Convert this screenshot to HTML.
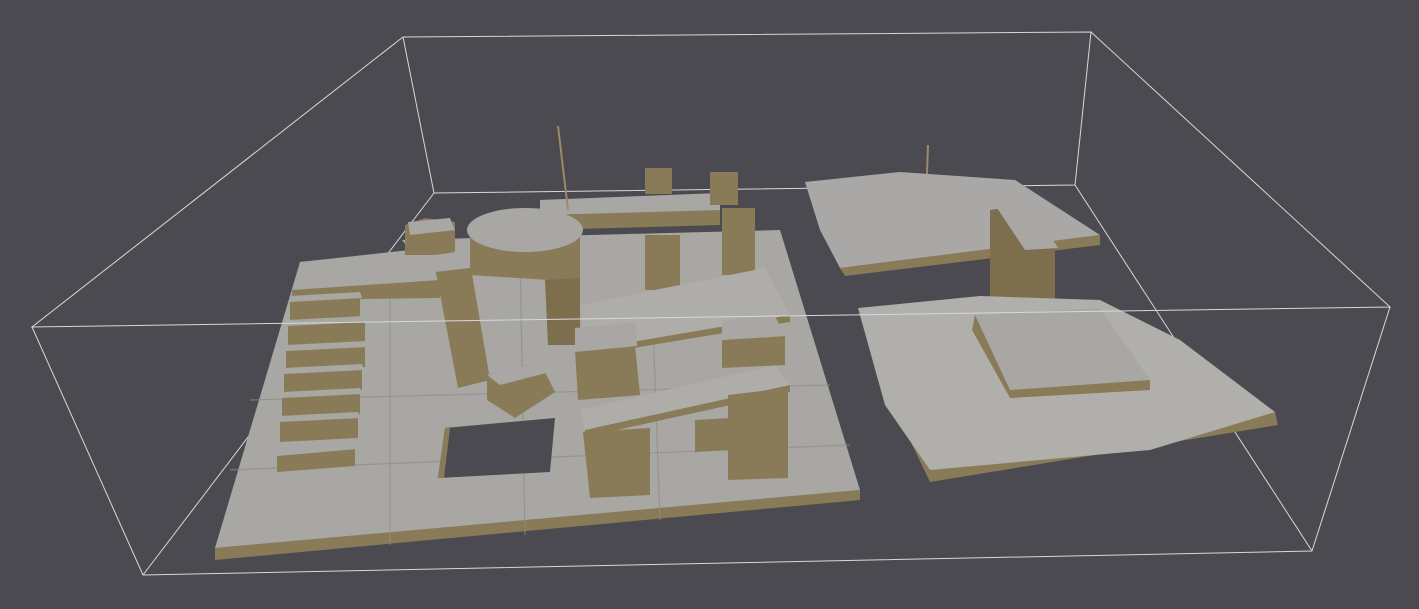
<!DOCTYPE html>
<html><head><style>html,body{margin:0;padding:0;background:#4b4a51;}svg{display:block}</style></head>
<body>
<svg width="1419" height="609" viewBox="0 0 1419 609" xmlns="http://www.w3.org/2000/svg">
<rect width="1419" height="609" fill="#4b4a51"/>
<g stroke="#d8d8dc" stroke-width="1" fill="none">
<polyline points="403,37 1091,32 1075,185 434,193 403,37"/>
<line x1="434" y1="193" x2="143" y2="575"/>
<line x1="1075" y1="185" x2="1312" y2="551"/>
</g>
<!-- left slab -->
<polygon points="215,548 860,490 860,500 215,560" fill="#8a7b58"/>
<polygon points="300,262 410,250 402,240 780,230 860,490 215,548" fill="#a8a7a4"/>
<g stroke="#8f8c86" stroke-width="1.2" fill="none" opacity="0.7">
<line x1="250" y1="400" x2="830" y2="385"/><line x1="230" y1="470" x2="850" y2="445"/>
<line x1="390" y1="260" x2="390" y2="545"/><line x1="520" y1="250" x2="525" y2="535"/><line x1="650" y1="240" x2="660" y2="520"/>
</g>
<polygon points="445,428 555,418 550,472 438,478" fill="#4b4a51"/>
<polygon points="445,428 450,428 444,478 438,478" fill="#8a7b58"/>
<!-- stairs -->
<polygon points="300,262 470,250 470,285 292,295" fill="#a8a7a4"/>
<polygon points="292,290 440,280 440,298 292,300" fill="#8a7b58"/>
<g fill="#8a7b58">
<polygon points="290,300 360,296 360,318 290,322"/>
<polygon points="288,325 365,320 365,342 288,346"/>
<polygon points="286,350 365,345 365,367 286,371"/>
<polygon points="284,372 362,368 362,390 284,394"/>
<polygon points="282,397 360,392 360,414 282,418"/>
<polygon points="280,421 358,416 358,438 280,442"/>
<polygon points="277,455 355,448 355,466 277,472"/>
</g>
<g fill="#a8a7a4">
<polygon points="290,296 360,292 362,298 290,302"/>
<polygon points="288,320 365,316 367,322 288,326"/>
<polygon points="286,345 365,341 367,347 286,351"/>
<polygon points="284,368 362,364 364,370 284,374"/>
<polygon points="282,392 360,388 362,394 282,398"/>
<polygon points="280,416 358,412 360,418 280,422"/>
<polygon points="277,450 355,443 357,449 277,456"/>
</g>
<!-- back structures -->
<polygon points="540,200 720,193 720,215 540,222" fill="#a8a7a4"/>
<polygon points="540,215 720,210 720,225 540,230" fill="#8a7b58"/>
<polygon points="405,225 425,218 455,222 455,255 405,255" fill="#8a7b58"/>
<polygon points="408,222 450,218 455,230 410,235" fill="#a8a7a4"/>
<polygon points="645,168 672,168 672,194 645,194" fill="#8a7b58"/>
<polygon points="710,172 738,172 738,205 710,205" fill="#8a7b58"/>
<polygon points="722,208 755,208 755,275 722,275" fill="#8a7b58"/>
<polygon points="645,235 680,235 680,290 645,290" fill="#8a7b58"/>
<line x1="558" y1="126" x2="568" y2="210" stroke="#9a8a68" stroke-width="2"/>
<line x1="928" y1="145" x2="926" y2="200" stroke="#9a8a68" stroke-width="2"/>
<!-- cylinder -->
<polygon points="470,232 580,236 580,282 470,275" fill="#8a7b58"/>
<polygon points="545,280 580,278 580,345 548,345" fill="#7d6e4e"/>
<ellipse cx="525" cy="230" rx="58" ry="22" fill="#a8a7a4"/>
<!-- pillar -->
<polygon points="435,268 470,262 490,380 458,388" fill="#8a7b58"/>
<polygon points="435,255 470,250 470,268 435,272" fill="#a8a7a4"/>
<polygon points="487,375 540,362 555,392 515,418 487,400" fill="#8a7b58"/>
<polygon points="487,375 540,362 550,372 500,385" fill="#a8a7a4"/>
<!-- ramp -->
<polygon points="580,305 765,268 790,315 585,350" fill="#aeada9"/>
<polygon points="580,410 775,365 790,385 585,430" fill="#aeada9"/>
<polygon points="585,350 790,315 790,322 585,356" fill="#8a7b58"/>
<polygon points="585,430 790,385 790,392 585,437" fill="#8a7b58"/>
<polygon points="575,350 635,345 640,395 578,400" fill="#8a7b58"/>
<polygon points="575,328 635,322 637,346 575,352" fill="#a8a7a4"/>
<polygon points="722,340 785,336 785,365 722,368" fill="#8a7b58"/>
<polygon points="722,320 775,316 785,336 722,340" fill="#a8a7a4"/>
<polygon points="583,432 650,428 650,495 590,498" fill="#8a7b58"/>
<polygon points="728,395 788,388 788,478 728,480" fill="#8a7b58"/>
<polygon points="695,420 730,418 730,450 695,452" fill="#8a7b58"/>
<!-- right terrain top -->
<polygon points="840,268 1100,235 1100,245 845,276" fill="#8a7b58"/>
<polygon points="805,182 900,172 1015,180 1100,235 840,268 820,230" fill="#a9a8a6"/>
<polygon points="990,210 1025,205 1055,245 1055,310 990,305" fill="#7d6e4e"/>
<polygon points="995,205 1030,205 1058,248 1025,250" fill="#a8a7a4"/>
<!-- right terrain bottom -->
<polygon points="930,470 1275,412 1278,425 930,482 905,430" fill="#8a7b58"/>
<polygon points="858,308 980,296 1100,300 1180,340 1275,412 1150,450 930,470 885,405" fill="#b0afac"/>
<polygon points="975,315 1100,308 1150,380 1010,390" fill="#a8a7a4"/>
<polygon points="975,315 1010,390 1010,398 972,330" fill="#8a7b58"/>
<polygon points="1010,390 1150,380 1150,390 1010,398" fill="#8a7b58"/>
<g stroke="#d8d8dc" stroke-width="1" fill="none">
<polyline points="403,37 32,327 1390,307 1091,32"/>
<polyline points="32,327 143,575 1312,551 1390,307"/>
</g>
</svg>
</body></html>
